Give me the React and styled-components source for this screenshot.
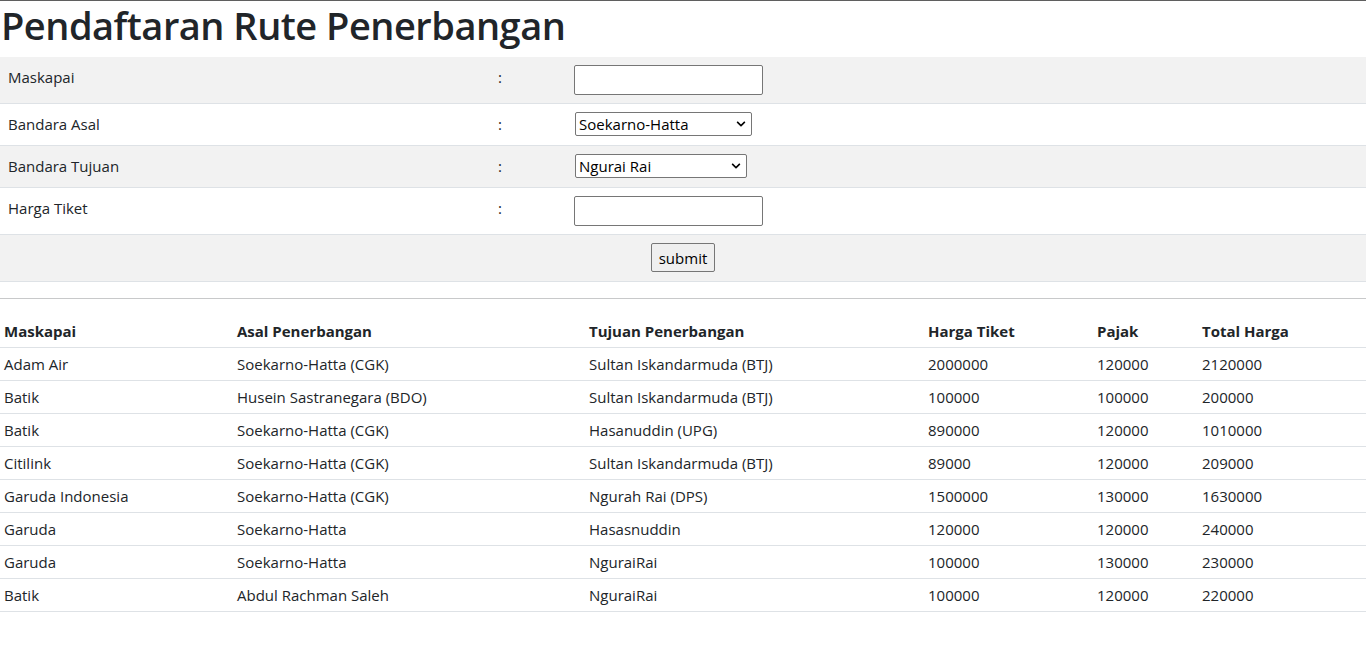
import React, { useState } from "react";
import styled, { createGlobalStyle } from "styled-components";
import { FaChevronDown } from "react-icons/fa";

const routes = [
  ["Adam Air", "Soekarno-Hatta (CGK)", "Sultan Iskandarmuda (BTJ)", 2000000, 120000],
  ["Batik", "Husein Sastranegara (BDO)", "Sultan Iskandarmuda (BTJ)", 100000, 100000],
  ["Batik", "Soekarno-Hatta (CGK)", "Hasanuddin (UPG)", 890000, 120000],
  ["Citilink", "Soekarno-Hatta (CGK)", "Sultan Iskandarmuda (BTJ)", 89000, 120000],
  ["Garuda Indonesia", "Soekarno-Hatta (CGK)", "Ngurah Rai (DPS)", 1500000, 130000],
  ["Garuda", "Soekarno-Hatta", "Hasasnuddin", 120000, 120000],
  ["Garuda", "Soekarno-Hatta", "NguraiRai", 100000, 130000],
  ["Batik", "Abdul Rachman Saleh", "NguraiRai", 100000, 120000],
];

const App = () => {
  const [maskapai, setMaskapai] = useState("");
  const [harga, setHarga] = useState("");
  const [asal, setAsal] = useState("Soekarno-Hatta");
  const [tujuan, setTujuan] = useState("Ngurai Rai");

  return (
    <Page>
      <GlobalStyle />
      <Title>Pendaftaran Rute Penerbangan</Title>
      <FormTable>
        <tbody>
          <FormRow>
            <LabelCell>Maskapai</LabelCell>
            <ColonCell>:</ColonCell>
            <td>
              <TextInput value={maskapai} onChange={(e) => setMaskapai(e.target.value)} />
            </td>
          </FormRow>
          <FormRow>
            <LabelCell>Bandara Asal</LabelCell>
            <ColonCell>:</ColonCell>
            <td>
              <SelectWrap $width={177}>
                <Select value={asal} onChange={(e) => setAsal(e.target.value)}>
                  <option>Soekarno-Hatta</option>
                  <option>Husein Sastranegara</option>
                  <option>Abdul Rachman Saleh</option>
                  <option>Juanda</option>
                </Select>
                <Chevron><FaChevronDown /></Chevron>
              </SelectWrap>
            </td>
          </FormRow>
          <FormRow>
            <LabelCell>Bandara Tujuan</LabelCell>
            <ColonCell>:</ColonCell>
            <td>
              <SelectWrap $width={172}>
                <Select value={tujuan} onChange={(e) => setTujuan(e.target.value)}>
                  <option>Ngurai Rai</option>
                  <option>Hasanuddin</option>
                  <option>Inanwatan</option>
                  <option>Sultan Iskandarmuda</option>
                </Select>
                <Chevron><FaChevronDown /></Chevron>
              </SelectWrap>
            </td>
          </FormRow>
          <FormRow>
            <LabelCell>Harga Tiket</LabelCell>
            <ColonCell>:</ColonCell>
            <td>
              <TextInput value={harga} onChange={(e) => setHarga(e.target.value)} />
            </td>
          </FormRow>
          <FormRow>
            <SubmitCell colSpan={3}>
              <SubmitButton type="button">submit</SubmitButton>
            </SubmitCell>
          </FormRow>
        </tbody>
      </FormTable>
      <Divider />
      <DataTable>
        <thead>
          <tr>
            <Th $w={233}>Maskapai</Th>
            <Th $w={352}>Asal Penerbangan</Th>
            <Th $w={339}>Tujuan Penerbangan</Th>
            <Th $w={169}>Harga Tiket</Th>
            <Th $w={105}>Pajak</Th>
            <Th>Total Harga</Th>
          </tr>
        </thead>
        <tbody>
          {routes.map(([m, a, t, h, p], i) => (
            <tr key={i}>
              <Td>{m}</Td>
              <Td>{a}</Td>
              <Td>{t}</Td>
              <Td>{h}</Td>
              <Td>{p}</Td>
              <Td>{h + p}</Td>
            </tr>
          ))}
        </tbody>
      </DataTable>
    </Page>
  );
};

const GlobalStyle = createGlobalStyle`
  * { box-sizing: border-box; }
  body {
    margin: 0;
    font-family: "Open Sans", "Noto Sans", sans-serif;
    font-size: 15px;
    line-height: 24px;
    color: #212529;
    background: #fff;
  }
`;

const Page = styled.div`
  border-top: 1px solid #5f5f5f;
  width: 1366px;
`;

const Title = styled.h1`
  margin: 0 0 8px;
  font-size: 38px;
  font-weight: 600;
  line-height: 48px;
  letter-spacing: -0.5px;
  padding-left: 1px;
`;

const FormTable = styled.table`
  width: 100%;
  border-collapse: collapse;
  margin-bottom: 16px;
  td {
    padding: 8px;
    vertical-align: top;
    border-bottom: 1px solid #dee2e6;
  }
`;

const FormRow = styled.tr`
  &:nth-child(odd) td {
    background: #f2f2f2;
  }
`;

const LabelCell = styled.td`
  width: 490px;
`;

const ColonCell = styled.td`
  width: 76px;
`;

const SubmitCell = styled.td`
  text-align: center;
  && {
    padding-bottom: 9px;
  }
`;

const TextInput = styled.input`
  display: block;
  width: 189px;
  height: 30px;
  border: 1px solid #767676;
  border-radius: 2px;
  background: #fff;
  padding: 1px 3px;
  font: inherit;
  outline: none;
`;

const SelectWrap = styled.div`
  position: relative;
  width: ${(p) => p.$width}px;
  height: 25px;
  margin-left: 1px;
`;

const Select = styled.select`
  appearance: none;
  display: block;
  width: 100%;
  height: 24px;
  border: 1px solid #767676;
  border-radius: 2px;
  background: #fff;
  color: #000;
  padding: 0 20px 0 3px;
  font-family: "Open Sans", "Noto Sans", sans-serif;
  font-size: 15px;
  line-height: 22px;
  outline: none;
`;

const Chevron = styled.span`
  position: absolute;
  right: 6px;
  top: 7px;
  font-size: 10px;
  line-height: 0;
  color: #000;
  pointer-events: none;
`;

const SubmitButton = styled.button`
  width: 64px;
  height: 29px;
  border: 1px solid #767676;
  border-radius: 2px;
  background: #efefef;
  color: #000;
  font-family: "Open Sans", "Noto Sans", sans-serif;
  font-size: 15px;
  padding: 0;
`;

const Divider = styled.hr`
  margin: 16px 0;
  border: 0;
  border-top: 1px solid #c8c9ca;
`;

const DataTable = styled.table`
  width: 100%;
  border-collapse: collapse;
`;

const Th = styled.th`
  width: ${(p) => (p.$w ? `${p.$w}px` : "auto")};
  text-align: left;
  font-weight: 700;
  padding: 4px;
  border-bottom: 1px solid #dee2e6;
`;

const Td = styled.td`
  padding: 4px;
  border-bottom: 1px solid #dee2e6;
`;

export default App;
